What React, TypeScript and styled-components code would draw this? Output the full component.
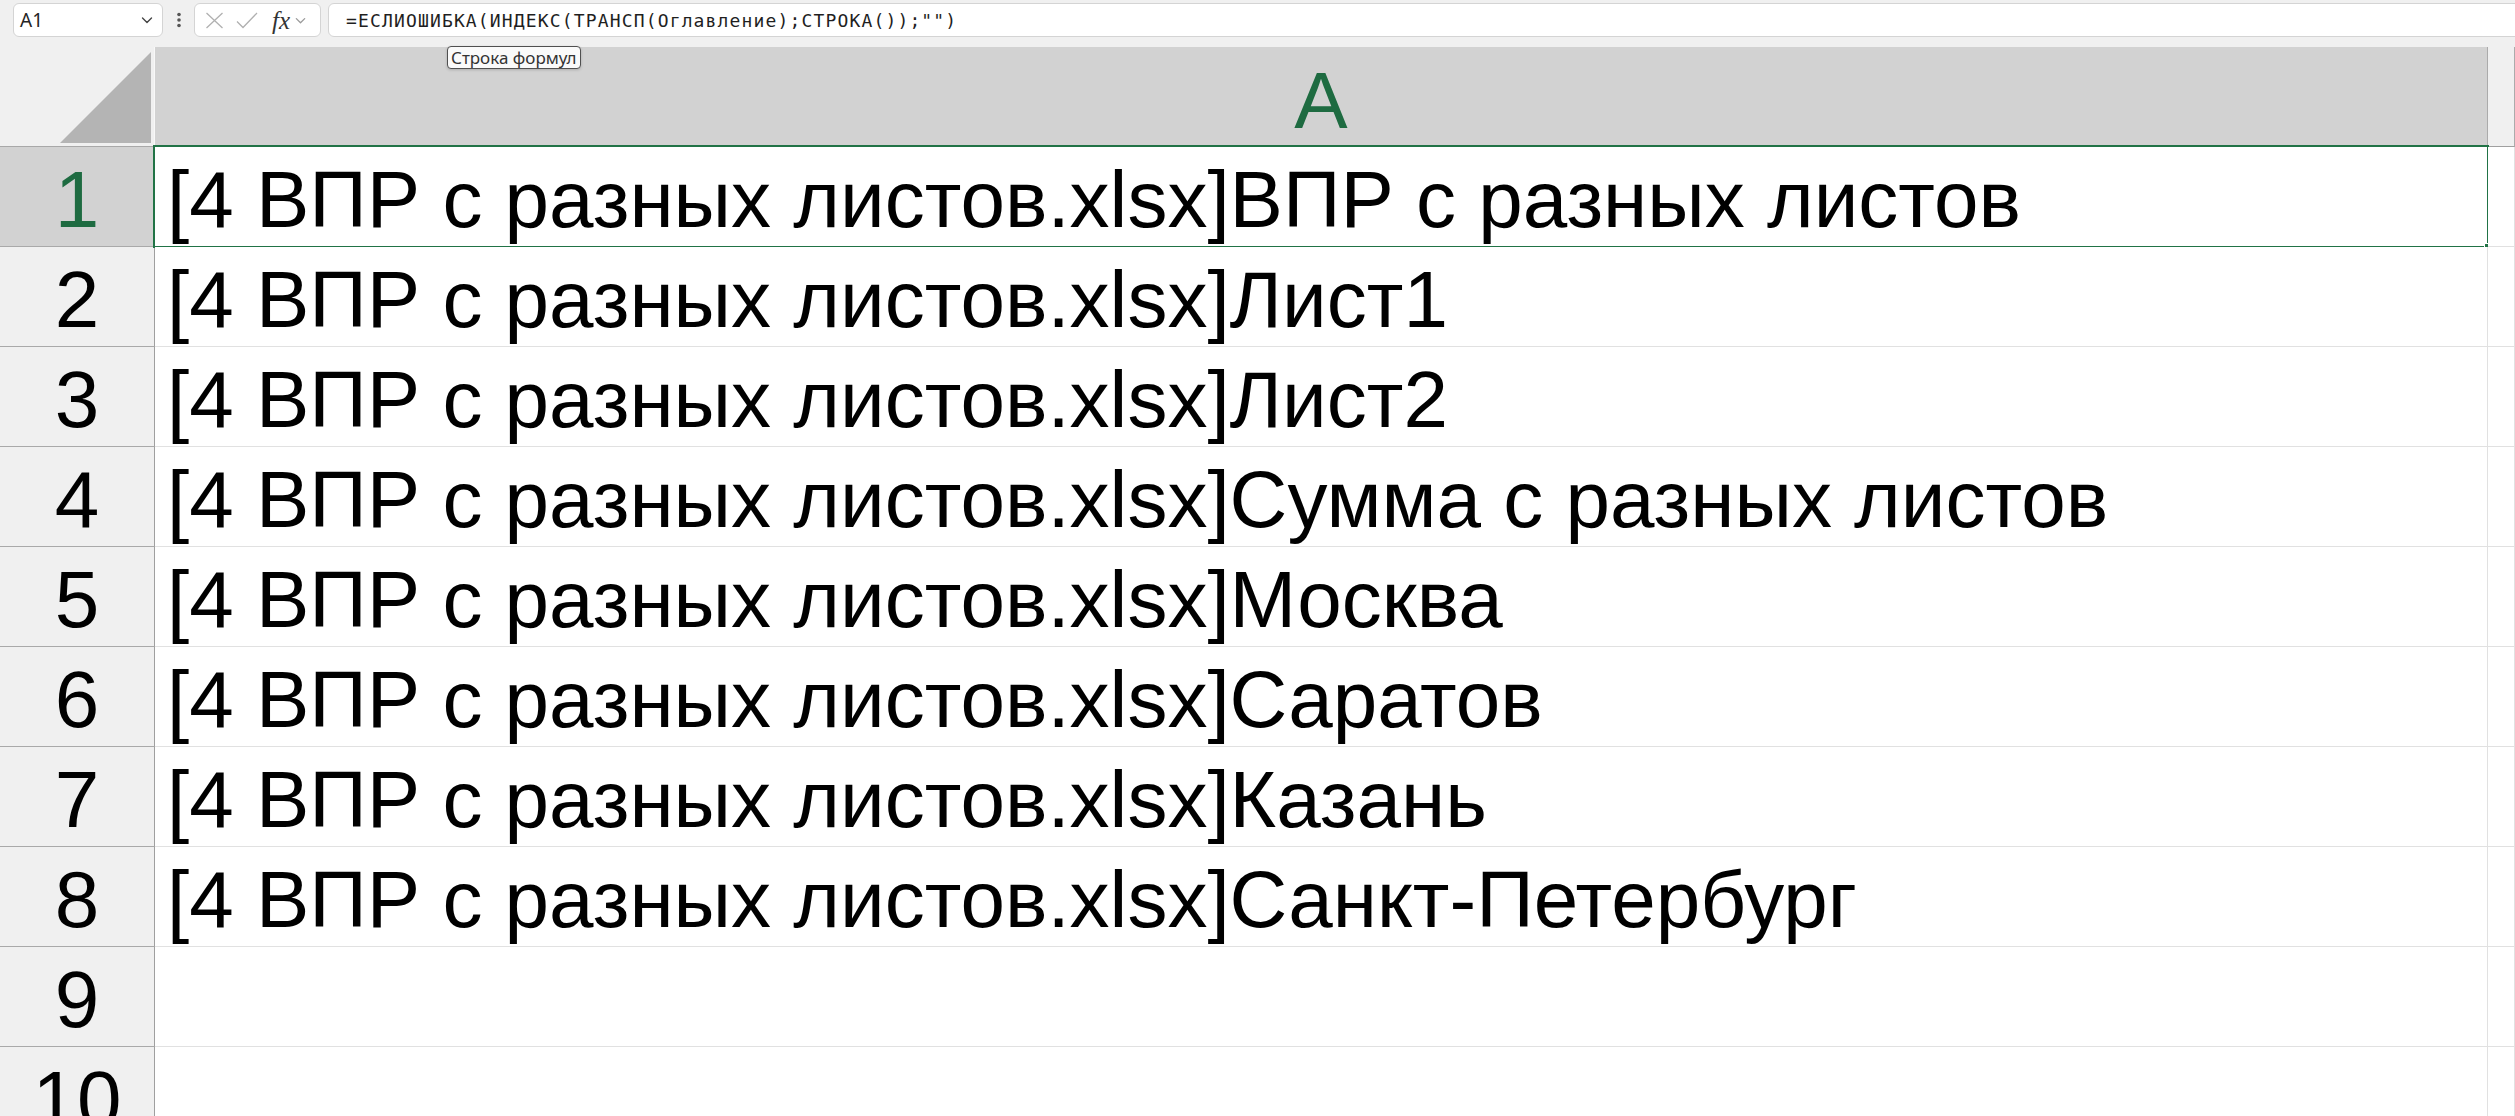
import styled, { createGlobalStyle } from "styled-components";

const GlobalStyle = createGlobalStyle`
  * { box-sizing: border-box; }
  html, body {
    margin: 0;
    padding: 0;
    background: #f0f0f0;
    overflow: hidden;
  }
`;

const Page = styled.div`
  position: relative;
  width: 2515px;
  height: 1116px;
  overflow: hidden;
  background: #f0f0f0;
  font-family: "Noto Sans", "Open Sans", sans-serif;
`;

const FormulaBar = styled.div`
  display: flex;
  align-items: flex-start;
  height: 47px;
  padding: 3px 0 0 13px;
`;

const NameBox = styled.div`
  display: flex;
  align-items: center;
  justify-content: space-between;
  width: 150px;
  height: 34px;
  padding: 0 8px 0 6px;
  background: #fff;
  border: 1px solid #d4d4d4;
  border-radius: 6px;
  font-size: 19px;
  color: #242424;
`;

const Dots = styled.div`
  display: flex;
  align-items: center;
  justify-content: center;
  width: 31px;
  height: 34px;
`;

const IconBox = styled.div`
  display: flex;
  align-items: center;
  width: 127px;
  height: 34px;
  padding-left: 10px;
  gap: 12px;
  background: #fff;
  border: 1px solid #d4d4d4;
  border-radius: 6px;
`;

const Fx = styled.span`
  font-family: "Liberation Serif", serif;
  font-style: italic;
  font-size: 25px;
  color: #333;
  line-height: 1;
  margin-left: 2px;
  margin-right: -8px;
`;

const FormulaBox = styled.div`
  flex: 1;
  display: flex;
  align-items: center;
  height: 34px;
  margin-left: 7px;
  margin-right: -12px;
  padding-left: 17px;
  background: #fff;
  border: 1px solid #d4d4d4;
  border-radius: 6px;
  font-family: "DejaVu Sans Mono", monospace;
  font-size: 18px;
  letter-spacing: 1.15px;
  color: #1f1f1f;
  white-space: nowrap;
`;

const Tooltip = styled.div`
  position: absolute;
  left: 447px;
  top: 46px;
  height: 23px;
  padding: 0 3px;
  display: flex;
  align-items: center;
  background: #fafafa;
  border: 1px solid #505050;
  border-radius: 4px;
  box-shadow: 0 1px 3px rgba(0, 0, 0, 0.18);
  font-size: 17px;
  color: #333;
  white-space: nowrap;
  z-index: 5;
`;

const Sheet = styled.div`
  display: grid;
  grid-template-columns: 155px 2333px 1fr;
  grid-auto-rows: 100px;
  font-family: "Liberation Sans", Arial, sans-serif;
`;

const Corner = styled.div`
  display: flex;
  align-items: flex-end;
  justify-content: flex-end;
  padding: 0 3px 3px 0;
  background: #f0f0f0;
  border-right: 1px solid #f8f8f8;
  border-bottom: 1px solid #a8a8a8;
`;

const CornerTriangle = styled.div`
  width: 91px;
  height: 91px;
  background: #b4b4b4;
  clip-path: polygon(100% 0, 100% 100%, 0 100%);
`;

const ColHeader = styled.div<{ $selected?: boolean }>`
  display: flex;
  align-items: flex-end;
  justify-content: center;
  padding-bottom: 5px;
  background: ${(p) => (p.$selected ? "#d2d2d2" : "#f0f0f0")};
  border-right: 1px solid #ababab;
  border-bottom: 1px solid #a0a0a0;
  font-size: 80px;
  line-height: 1;
  color: ${(p) => (p.$selected ? "#1e6b41" : "#000")};
`;

const RowHeader = styled.div<{ $selected?: boolean }>`
  display: flex;
  align-items: flex-end;
  justify-content: center;
  padding-bottom: 6px;
  background: ${(p) => (p.$selected ? "#d2d2d2" : "#f0f0f0")};
  border-right: 1px solid #9f9f9f;
  border-bottom: 1px solid #a9a9a9;
  font-size: 80px;
  line-height: 1;
  color: ${(p) => (p.$selected ? "#1e6b41" : "#000")};
`;

const Cell = styled.div`
  position: relative;
  display: flex;
  align-items: flex-end;
  padding: 0 0 6px 12px;
  background: #fff;
  border-right: 1px solid #e1e1e1;
  border-bottom: 1px solid #e1e1e1;
  font-size: 80px;
  line-height: 1;
  color: #000;
  white-space: nowrap;
`;

const Selection = styled.div`
  position: absolute;
  left: -2px;
  top: -2px;
  right: -2px;
  bottom: -2px;
  border: 2px solid #217346;
  pointer-events: none;
`;

const FillHandle = styled.div`
  position: absolute;
  right: -5px;
  bottom: -5px;
  width: 8px;
  height: 8px;
  background: #217346;
  border: 1px solid #fff;
`;

const Chevron = ({ color = "#444", size = 14 }: { color?: string; size?: number }) => (
  <svg width={size} height={size} viewBox="0 0 14 14" fill="none">
    <path d="M2.5 5l4.5 4.5L11.5 5" stroke={color} strokeWidth="1.4" strokeLinecap="round" strokeLinejoin="round" />
  </svg>
);

const prefix = "[4 ВПР с разных листов.xlsx]";
const sheets = [
  "ВПР с разных листов",
  "Лист1",
  "Лист2",
  "Сумма с разных листов",
  "Москва",
  "Саратов",
  "Казань",
  "Санкт-Петербург",
];

const rows = Array.from({ length: 10 }, (_, i) => (sheets[i] ? prefix + sheets[i] : ""));

export default function App() {
  return (
    <Page>
      <GlobalStyle />
      <FormulaBar>
        <NameBox>
          <span>A1</span>
          <Chevron />
        </NameBox>
        <Dots>
          <svg width="6" height="16" viewBox="0 0 6 16">
            <circle cx="3" cy="2.5" r="1.8" fill="#555" />
            <circle cx="3" cy="8" r="1.8" fill="#555" />
            <circle cx="3" cy="13.5" r="1.8" fill="#555" />
          </svg>
        </Dots>
        <IconBox>
          <svg width="19" height="17" viewBox="0 0 19 17">
            <path d="M1.5 1L17.5 16M17.5 1L1.5 16" stroke="#b0b0b0" strokeWidth="1.3" />
          </svg>
          <svg width="22" height="17" viewBox="0 0 22 17">
            <path d="M1 9.5L7 15.5L21 1" stroke="#b0b0b0" strokeWidth="1.3" fill="none" />
          </svg>
          <Fx>fx</Fx>
          <Chevron color="#9a9a9a" size={13} />
        </IconBox>
        <FormulaBox>=ЕСЛИОШИБКА(ИНДЕКС(ТРАНСП(Оглавление);СТРОКА());"")</FormulaBox>
      </FormulaBar>
      <Tooltip>Строка формул</Tooltip>
      <Sheet>
        <Corner>
          <CornerTriangle />
        </Corner>
        <ColHeader $selected>A</ColHeader>
        <ColHeader />
        {rows.map((text, i) => (
          <>
            <RowHeader key={`h${i}`} $selected={i === 0}>
              {i + 1}
            </RowHeader>
            <Cell key={`a${i}`}>
              {text}
              {i === 0 && (
                <Selection>
                  <FillHandle />
                </Selection>
              )}
            </Cell>
            <Cell key={`b${i}`} />
          </>
        ))}
      </Sheet>
    </Page>
  );
}
